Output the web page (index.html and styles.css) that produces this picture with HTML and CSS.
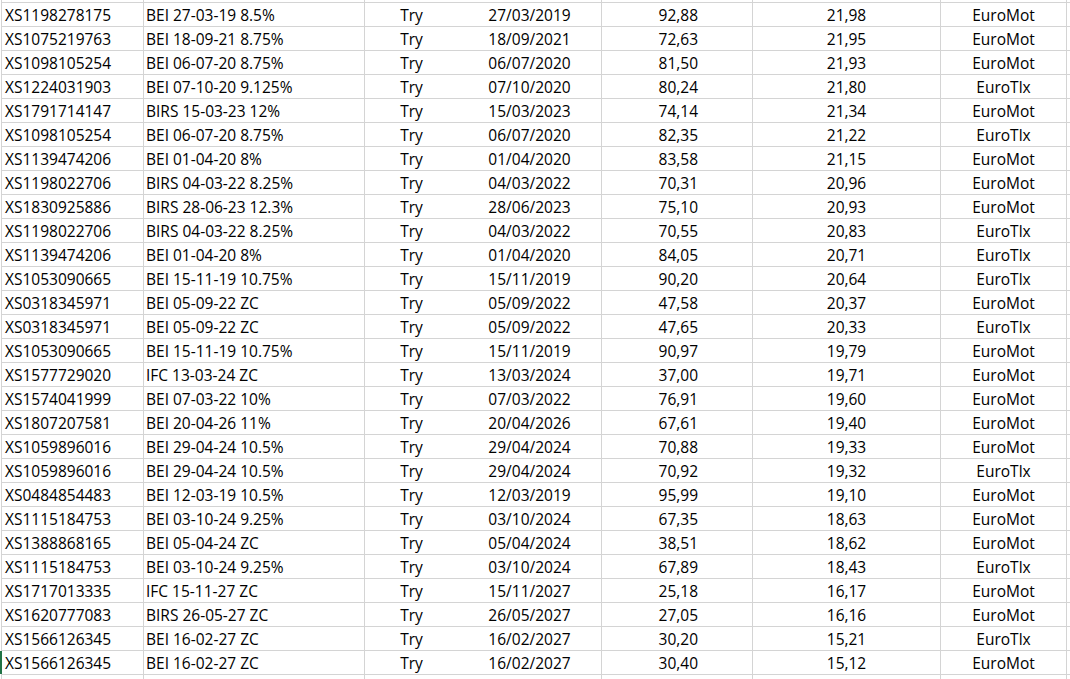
FILE: index.html
```html
<!DOCTYPE html>
<html>
<head>
<meta charset="utf-8">
<link rel="stylesheet" href="styles.css">
</head>
<body>
<div class="sheet">
  <div class="row stub"><div class="c a"></div><div class="c b"></div><div class="c c1"></div><div class="c c2"></div><div class="c d"></div><div class="c e"></div><div class="c f"></div></div>
  <div class="row"><div class="c a">XS1198278175</div><div class="c b">BEI 27-03-19 8.5%</div><div class="c c1">Try</div><div class="c c2">27/03/2019</div><div class="c d">92,88</div><div class="c e">21,98</div><div class="c f">EuroMot</div></div>
  <div class="row"><div class="c a">XS1075219763</div><div class="c b">BEI 18-09-21 8.75%</div><div class="c c1">Try</div><div class="c c2">18/09/2021</div><div class="c d">72,63</div><div class="c e">21,95</div><div class="c f">EuroMot</div></div>
  <div class="row"><div class="c a">XS1098105254</div><div class="c b">BEI 06-07-20 8.75%</div><div class="c c1">Try</div><div class="c c2">06/07/2020</div><div class="c d">81,50</div><div class="c e">21,93</div><div class="c f">EuroMot</div></div>
  <div class="row"><div class="c a">XS1224031903</div><div class="c b">BEI 07-10-20 9.125%</div><div class="c c1">Try</div><div class="c c2">07/10/2020</div><div class="c d">80,24</div><div class="c e">21,80</div><div class="c f">EuroTlx</div></div>
  <div class="row"><div class="c a">XS1791714147</div><div class="c b">BIRS 15-03-23 12%</div><div class="c c1">Try</div><div class="c c2">15/03/2023</div><div class="c d">74,14</div><div class="c e">21,34</div><div class="c f">EuroMot</div></div>
  <div class="row"><div class="c a">XS1098105254</div><div class="c b">BEI 06-07-20 8.75%</div><div class="c c1">Try</div><div class="c c2">06/07/2020</div><div class="c d">82,35</div><div class="c e">21,22</div><div class="c f">EuroTlx</div></div>
  <div class="row"><div class="c a">XS1139474206</div><div class="c b">BEI 01-04-20 8%</div><div class="c c1">Try</div><div class="c c2">01/04/2020</div><div class="c d">83,58</div><div class="c e">21,15</div><div class="c f">EuroMot</div></div>
  <div class="row"><div class="c a">XS1198022706</div><div class="c b">BIRS 04-03-22 8.25%</div><div class="c c1">Try</div><div class="c c2">04/03/2022</div><div class="c d">70,31</div><div class="c e">20,96</div><div class="c f">EuroMot</div></div>
  <div class="row"><div class="c a">XS1830925886</div><div class="c b">BIRS 28-06-23 12.3%</div><div class="c c1">Try</div><div class="c c2">28/06/2023</div><div class="c d">75,10</div><div class="c e">20,93</div><div class="c f">EuroMot</div></div>
  <div class="row"><div class="c a">XS1198022706</div><div class="c b">BIRS 04-03-22 8.25%</div><div class="c c1">Try</div><div class="c c2">04/03/2022</div><div class="c d">70,55</div><div class="c e">20,83</div><div class="c f">EuroTlx</div></div>
  <div class="row"><div class="c a">XS1139474206</div><div class="c b">BEI 01-04-20 8%</div><div class="c c1">Try</div><div class="c c2">01/04/2020</div><div class="c d">84,05</div><div class="c e">20,71</div><div class="c f">EuroTlx</div></div>
  <div class="row"><div class="c a">XS1053090665</div><div class="c b">BEI 15-11-19 10.75%</div><div class="c c1">Try</div><div class="c c2">15/11/2019</div><div class="c d">90,20</div><div class="c e">20,64</div><div class="c f">EuroTlx</div></div>
  <div class="row"><div class="c a">XS0318345971</div><div class="c b">BEI 05-09-22 ZC</div><div class="c c1">Try</div><div class="c c2">05/09/2022</div><div class="c d">47,58</div><div class="c e">20,37</div><div class="c f">EuroMot</div></div>
  <div class="row"><div class="c a">XS0318345971</div><div class="c b">BEI 05-09-22 ZC</div><div class="c c1">Try</div><div class="c c2">05/09/2022</div><div class="c d">47,65</div><div class="c e">20,33</div><div class="c f">EuroTlx</div></div>
  <div class="row"><div class="c a">XS1053090665</div><div class="c b">BEI 15-11-19 10.75%</div><div class="c c1">Try</div><div class="c c2">15/11/2019</div><div class="c d">90,97</div><div class="c e">19,79</div><div class="c f">EuroMot</div></div>
  <div class="row"><div class="c a">XS1577729020</div><div class="c b">IFC 13-03-24 ZC</div><div class="c c1">Try</div><div class="c c2">13/03/2024</div><div class="c d">37,00</div><div class="c e">19,71</div><div class="c f">EuroMot</div></div>
  <div class="row"><div class="c a">XS1574041999</div><div class="c b">BEI 07-03-22 10%</div><div class="c c1">Try</div><div class="c c2">07/03/2022</div><div class="c d">76,91</div><div class="c e">19,60</div><div class="c f">EuroMot</div></div>
  <div class="row"><div class="c a">XS1807207581</div><div class="c b">BEI 20-04-26 11%</div><div class="c c1">Try</div><div class="c c2">20/04/2026</div><div class="c d">67,61</div><div class="c e">19,40</div><div class="c f">EuroMot</div></div>
  <div class="row"><div class="c a">XS1059896016</div><div class="c b">BEI 29-04-24 10.5%</div><div class="c c1">Try</div><div class="c c2">29/04/2024</div><div class="c d">70,88</div><div class="c e">19,33</div><div class="c f">EuroMot</div></div>
  <div class="row"><div class="c a">XS1059896016</div><div class="c b">BEI 29-04-24 10.5%</div><div class="c c1">Try</div><div class="c c2">29/04/2024</div><div class="c d">70,92</div><div class="c e">19,32</div><div class="c f">EuroTlx</div></div>
  <div class="row"><div class="c a">XS0484854483</div><div class="c b">BEI 12-03-19 10.5%</div><div class="c c1">Try</div><div class="c c2">12/03/2019</div><div class="c d">95,99</div><div class="c e">19,10</div><div class="c f">EuroMot</div></div>
  <div class="row"><div class="c a">XS1115184753</div><div class="c b">BEI 03-10-24 9.25%</div><div class="c c1">Try</div><div class="c c2">03/10/2024</div><div class="c d">67,35</div><div class="c e">18,63</div><div class="c f">EuroMot</div></div>
  <div class="row"><div class="c a">XS1388868165</div><div class="c b">BEI 05-04-24 ZC</div><div class="c c1">Try</div><div class="c c2">05/04/2024</div><div class="c d">38,51</div><div class="c e">18,62</div><div class="c f">EuroMot</div></div>
  <div class="row"><div class="c a">XS1115184753</div><div class="c b">BEI 03-10-24 9.25%</div><div class="c c1">Try</div><div class="c c2">03/10/2024</div><div class="c d">67,89</div><div class="c e">18,43</div><div class="c f">EuroTlx</div></div>
  <div class="row"><div class="c a">XS1717013335</div><div class="c b">IFC 15-11-27 ZC</div><div class="c c1">Try</div><div class="c c2">15/11/2027</div><div class="c d">25,18</div><div class="c e">16,17</div><div class="c f">EuroMot</div></div>
  <div class="row"><div class="c a">XS1620777083</div><div class="c b">BIRS 26-05-27 ZC</div><div class="c c1">Try</div><div class="c c2">26/05/2027</div><div class="c d">27,05</div><div class="c e">16,16</div><div class="c f">EuroMot</div></div>
  <div class="row"><div class="c a">XS1566126345</div><div class="c b">BEI 16-02-27 ZC</div><div class="c c1">Try</div><div class="c c2">16/02/2027</div><div class="c d">30,20</div><div class="c e">15,21</div><div class="c f">EuroTlx</div></div>
  <div class="row sel"><div class="c a">XS1566126345</div><div class="c b">BEI 16-02-27 ZC</div><div class="c c1">Try</div><div class="c c2">16/02/2027</div><div class="c d">30,40</div><div class="c e">15,12</div><div class="c f">EuroMot</div></div>
  <div class="row tail"><div class="c a"></div><div class="c b"></div><div class="c c1"></div><div class="c c2"></div><div class="c d"></div><div class="c e"></div><div class="c f"></div></div>
</div>
</body>
</html>
```

FILE: styles.css
```css
html, body {
  margin: 0;
  padding: 0;
  background: #ffffff;
  overflow: hidden;
}

.sheet {
  display: flex;
  flex-direction: column;
  width: 1070px;
  height: 679px;
  overflow: hidden;
  font-family: "Open Sans", "Liberation Sans", sans-serif;
  font-size: 15.5px;
  color: #000000;
}

.row {
  display: flex;
  height: 23px;
  border-bottom: 1px solid #d4d4d4;
  margin-left: 1px;
  border-left: 1px solid #d4d4d4;
  flex: none;
  position: relative;
}

.row.stub {
  height: 2px;
}

.row.tail {
  border-bottom: none;
  height: 10px;
}

.row.sel::before {
  content: "";
  position: absolute;
  left: -2px;
  top: 0;
  width: 2px;
  height: 23px;
  background: #217346;
}

.c {
  flex: none;
  box-sizing: border-box;
  height: 100%;
  line-height: 25px;
  white-space: nowrap;
  overflow: hidden;
  border-right: 1px solid #d4d4d4;
}

.a { width: 142px; padding-left: 3px; }
.b { width: 221px; padding-left: 2px; }
.c1 { width: 93px; border-right: none; text-align: center; }
.c2 { width: 144px; text-align: center; }
.d { width: 151px; text-align: right; padding-right: 54px; }
.e { width: 188px; text-align: center; }
.f { width: 126px; text-align: center; }
```
